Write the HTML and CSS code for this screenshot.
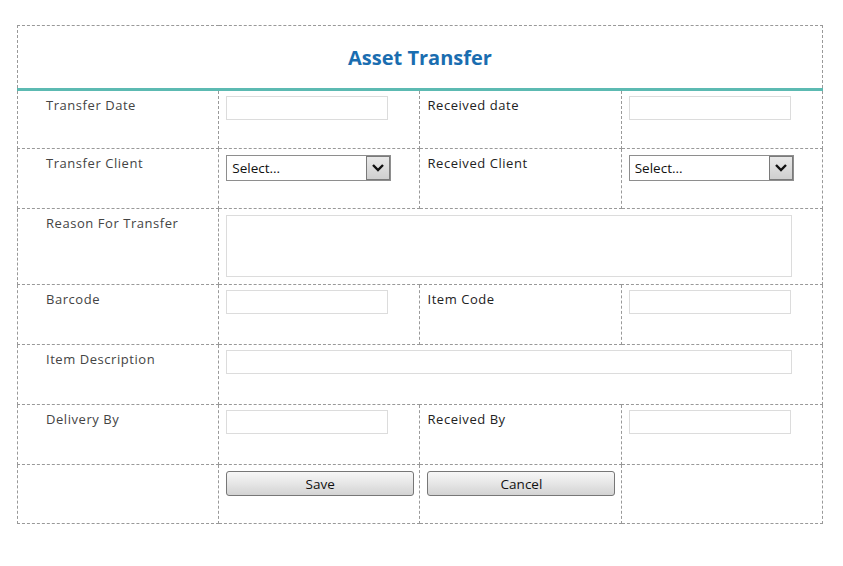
FILE: index.html
```html
<!DOCTYPE html>
<html lang="en">
<head>
    <meta charset="UTF-8">
    <meta name="viewport" content="width=device-width, initial-scale=1.0">
    <title>Asset Transfer</title>
    <link rel="stylesheet" href="styles.css">
</head>
<body>
  <div class="container">
    <table class="form-table">
      <colgroup>
        <col class="col">
        <col class="col">
        <col class="col">
        <col class="col">
      </colgroup>
      <thead>
        <tr>
          <th colspan="4" class="title">Asset Transfer</th>
        </tr>
      </thead>
      <tbody>
        <tr class="row-std">
          <td class="label">Transfer Date</td>
          <td><input type="text" class="field"></td>
          <td class="label label-right">Received date</td>
          <td><input type="text" class="field"></td>
        </tr>
        <tr class="row-tall">
          <td class="label">Transfer Client</td>
          <td>
            <div class="select-wrap">
              <select class="select"><option>Select...</option></select>
              <span class="select-arrow">
                <svg width="14" height="10" viewBox="0 0 14 10"><path d="M2 2 L7 7 L12 2" fill="none" stroke="#111" stroke-width="2.4"/></svg>
              </span>
            </div>
          </td>
          <td class="label label-right">Received Client</td>
          <td>
            <div class="select-wrap">
              <select class="select"><option>Select...</option></select>
              <span class="select-arrow">
                <svg width="14" height="10" viewBox="0 0 14 10"><path d="M2 2 L7 7 L12 2" fill="none" stroke="#111" stroke-width="2.4"/></svg>
              </span>
            </div>
          </td>
        </tr>
        <tr class="row-reason">
          <td class="label">Reason For Transfer</td>
          <td colspan="3"><textarea class="area"></textarea></td>
        </tr>
        <tr class="row-tall">
          <td class="label">Barcode</td>
          <td><input type="text" class="field"></td>
          <td class="label label-right">Item Code</td>
          <td><input type="text" class="field"></td>
        </tr>
        <tr class="row-tall">
          <td class="label">Item Description</td>
          <td colspan="3"><input type="text" class="field field-wide"></td>
        </tr>
        <tr class="row-tall">
          <td class="label">Delivery By</td>
          <td><input type="text" class="field"></td>
          <td class="label label-right">Received By</td>
          <td><input type="text" class="field"></td>
        </tr>
        <tr class="row-last">
          <td></td>
          <td><button type="button" class="btn">Save</button></td>
          <td><button type="button" class="btn">Cancel</button></td>
          <td></td>
        </tr>
      </tbody>
    </table>
  </div>
</body>
</html>
```

FILE: styles.css
```css
body {
    font-family: "Open Sans", Arial, sans-serif;
    margin: 0;
    background: #fff;
}
.container {
    padding: 25px 0 0 17px;
}
.form-table {
    width: 806px;
    border-collapse: collapse;
    table-layout: fixed;
}
.col {
    width: 201px;
}
.form-table th,
.form-table td {
    border: 1px dashed #999;
    vertical-align: top;
    padding: 0;
}
.title {
    height: 62px;
    padding: 0;
    text-align: center;
    vertical-align: middle !important;
    color: #1a6db0;
    font-size: 20px;
    font-weight: bold;
    border-bottom: 3px solid #5cbab2 !important;
}
.form-table td {
    padding: 5px 7px 0 7px;
}
.label {
    font-size: 13px;
    color: #444;
    letter-spacing: 0.55px;
    padding-top: 5px !important;
    padding-left: 28px !important;
}
.label-right {
    padding-left: 7px !important;
    color: #222;
}
.row-std td {
    height: 52px;
}
.row-tall td {
    height: 54px;
}
.row-reason td {
    height: 70px;
}
.row-last td {
    height: 52px;
    padding-top: 6px;
}
.field {
    display: block;
    box-sizing: border-box;
    width: 162px;
    height: 24px;
    border: 1px solid #dcdcdc;
    background: #fff;
    margin: 0;
}
.field-wide {
    width: 566px;
}
.area {
    display: block;
    box-sizing: border-box;
    width: 566px;
    height: 62px;
    border: 1px solid #dcdcdc;
    resize: none;
    margin: 1px 0 0 0;
}
.select-wrap {
    position: relative;
    width: 165px;
    height: 26px;
    margin-top: 1px;
}
.select {
    appearance: none;
    -webkit-appearance: none;
    box-sizing: border-box;
    width: 165px;
    height: 26px;
    border: 1px solid #8e8e8e;
    background: #fff;
    font-family: "Open Sans", Arial, sans-serif;
    font-size: 13.5px;
    color: #111;
    padding: 0 0 0 5px;
    border-radius: 0;
}
.select-arrow {
    position: absolute;
    top: 1px;
    right: 1px;
    width: 22px;
    height: 22px;
    border: 1px solid #7a7a7a;
    background: linear-gradient(#e8e8e8, #cfcfcf);
    display: flex;
    align-items: center;
    justify-content: center;
}
.btn {
    display: block;
    box-sizing: border-box;
    width: 188px;
    height: 25px;
    border: 1px solid #777;
    border-radius: 3px;
    background: linear-gradient(#f7f7f7, #e6e6e6 50%, #d3d3d3);
    font-family: "Open Sans", Arial, sans-serif;
    font-size: 13.5px;
    color: #111;
    padding: 0;
}
```
